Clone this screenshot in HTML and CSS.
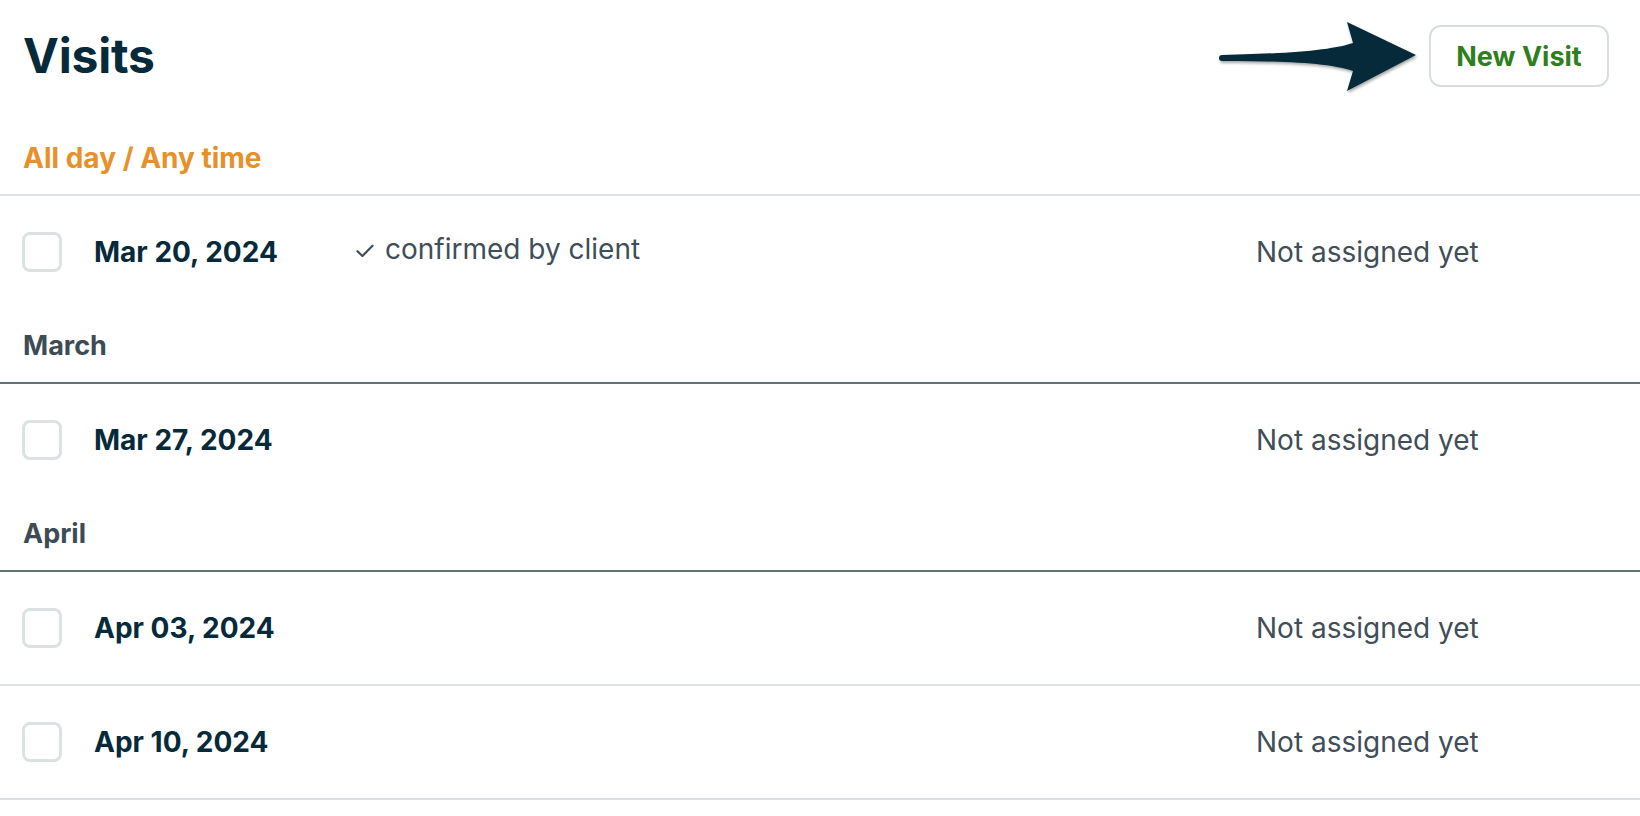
FILE: index.html
```html
<!DOCTYPE html>
<html lang="en">
<head>
<meta charset="utf-8">
<title>Visits</title>
<link rel="stylesheet" href="styles.css">
</head>
<body>
<div class="page">
  <header class="page-header">
    <h1 class="title">Visits</h1>
    <button class="btn-new" type="button">New Visit</button>
    <svg class="callout-arrow" width="206" height="80" viewBox="0 0 206 80" aria-hidden="true">
      <path d="M 6 37 C 70 35.5, 112 33, 137 25 L 131 4 L 200 37 L 131 73 L 137 53 C 112 45, 70 43, 6 43 A 3 3 0 0 1 6 37 Z" fill="#062a3a"/>
    </svg>
  </header>

  <section class="group">
    <h2 class="group-title group-title--anytime">All day / Any time</h2>
    <div class="visit-row visit-row--last">
      <span class="checkbox"></span>
      <span class="visit-date">Mar 20, 2024</span>
      <span class="visit-status">
        <svg class="check-icon" width="18" height="14" viewBox="0 0 18 14" aria-hidden="true"><path d="M1.5 7.2 L6.4 12 L16.5 1.8" fill="none" stroke="#3f4e58" stroke-width="2.2" stroke-linecap="round" stroke-linejoin="round"/></svg>
        confirmed by client
      </span>
      <span class="visit-assignee">Not assigned yet</span>
    </div>
  </section>

  <section class="group">
    <h2 class="group-title group-title--month">March</h2>
    <div class="visit-row visit-row--last">
      <span class="checkbox"></span>
      <span class="visit-date">Mar 27, 2024</span>
      <span class="visit-status"></span>
      <span class="visit-assignee">Not assigned yet</span>
    </div>
  </section>

  <section class="group">
    <h2 class="group-title group-title--month">April</h2>
    <div class="visit-row">
      <span class="checkbox"></span>
      <span class="visit-date">Apr 03, 2024</span>
      <span class="visit-status"></span>
      <span class="visit-assignee">Not assigned yet</span>
    </div>
    <div class="visit-row">
      <span class="checkbox"></span>
      <span class="visit-date">Apr 10, 2024</span>
      <span class="visit-status"></span>
      <span class="visit-assignee">Not assigned yet</span>
    </div>
  </section>
</div>
</body>
</html>
```

FILE: styles.css
```css
* { box-sizing: border-box; }

html, body {
  margin: 0;
  padding: 0;
  background: #ffffff;
}

body {
  font-family: Inter, "Noto Sans", "Liberation Sans", sans-serif;
  color: #062a3a;
}

.page {
  width: 1640px;
}

.page-header {
  position: relative;
  display: flex;
  align-items: center;
  justify-content: space-between;
  height: 120px;
  padding: 25px 31px 33px 23px;
}

.title {
  margin: 0;
  font-size: 48px;
  font-weight: 700;
  line-height: 62px;
  color: #062a3a;
  letter-spacing: -0.2px;
}

.btn-new {
  width: 180px;
  height: 62px;
  border: 2px solid #d7dde1;
  border-radius: 12px;
  background: #ffffff;
  color: #2f7f1e;
  font-family: Inter, "Noto Sans", "Liberation Sans", sans-serif;
  font-size: 27px;
  font-weight: 700;
  padding: 0;
}

.callout-arrow {
  position: absolute;
  left: 1216px;
  top: 18px;
  filter: drop-shadow(1px 2px 1.5px rgba(0, 0, 0, 0.35));
}

.group-title {
  margin: 0;
  padding: 21px 23px 19px;
  font-size: 27px;
  line-height: 34px;
  font-weight: 700;
}

.group-title--anytime {
  color: #e8902a;
  font-size: 28px;
  border-bottom: 2px solid #dde1e4;
}

.group-title--month {
  color: #3d4b55;
  border-bottom: 2px solid #63737e;
}

.visit-row {
  display: flex;
  align-items: center;
  height: 114px;
  padding: 0 22px;
  border-bottom: 2px solid #dde1e4;
}

.visit-row--last {
  border-bottom: none;
  height: 112px;
}

.checkbox {
  flex: 0 0 40px;
  width: 40px;
  height: 40px;
  border: 3px solid #dce1e4;
  border-radius: 8px;
  margin-right: 32px;
}

.visit-date {
  flex: 0 0 262px;
  font-size: 28px;
  font-weight: 700;
  color: #062a3a;
}

.visit-status {
  flex: 1 1 auto;
  display: flex;
  align-items: center;
  gap: 11px;
  font-size: 28px;
  color: #3f4e58;
  margin-top: -6px;
}

.check-icon {
  flex: 0 0 auto;
  margin-top: 4px;
}

.visit-assignee {
  flex: 0 0 362px;
  font-size: 28px;
  color: #3f4e58;
}
```
